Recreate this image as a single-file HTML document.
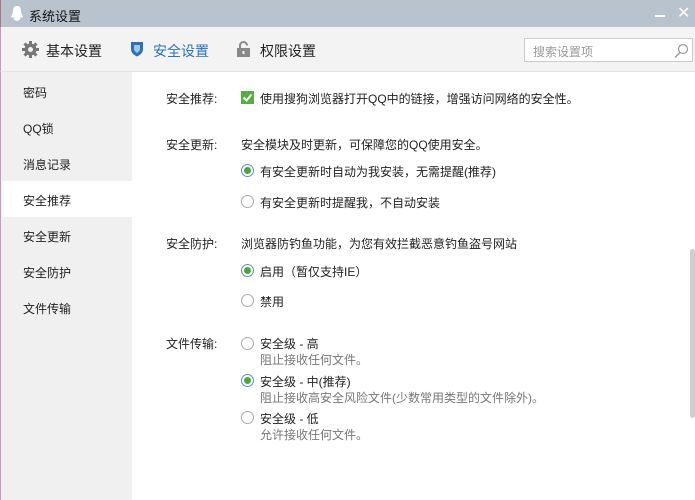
<!DOCTYPE html>
<html><head><meta charset="utf-8"><style>
*{margin:0;padding:0;box-sizing:border-box}
body{width:695px;height:500px;overflow:hidden;background:#fff;font-family:"Liberation Sans","Noto Sans CJK SC","Microsoft YaHei",sans-serif;font-size:12px;color:#222;position:relative}
.title{position:absolute;left:0;top:0;width:695px;height:27px;background:#b9c3cd;border-left:1px solid #a78;}
.title span{position:absolute;left:28px;top:6px;font-size:13px;color:#111}
.tb{position:absolute;left:0;top:27px;width:695px;height:45px;background:#f3f3f3;border-bottom:1px solid #e2e2e2;border-left:1px solid #c9b;}
.tab{position:absolute;top:14px;font-size:14px;color:#222}
.side{position:absolute;left:0;top:72px;width:132px;height:428px;background:#f0f0f0;border-left:1px solid #c9b;}
.si{position:absolute;left:22px;font-size:12px}
.sel{position:absolute;left:1px;top:109px;width:131px;height:36px;background:#fff}
.t{position:absolute;white-space:nowrap}
.g{color:#777}
.rad{position:absolute;width:13px;height:13px;border:1px solid #aaa;border-radius:50%;background:#fff}
.rad.on{border-color:#5b8fc9}
.rad.on::after{content:"";position:absolute;left:2px;top:2px;width:7px;height:7px;border-radius:50%;background:#4aa83a}
</style></head><body>
<div class="title">
<svg style="position:absolute;left:9px;top:5px" width="14" height="17" viewBox="0 0 14 17"><path d="M7 1C3.5 1 3 4 3 7L1 12c1 1 2 0 2.5 0C3 14 5 16 7 16s4-2 3.5-4c.5 0 1.5 1 2.5 0L11 7c0-3-.5-6-4-6z" fill="#fff"/></svg>
<span>系统设置</span>
<div class="t" style="left:654px;top:9px;width:10px;height:2px;background:#fff;top:15px"></div>
<div class="t" style="left:676px;top:3px;color:#fff;font-size:16px">✕</div>
</div>
<div class="tb">
<svg style="position:absolute;left:21px;top:14px" width="17" height="17" viewBox="0 0 17 17"><g fill="#777"><circle cx="8.5" cy="8.5" r="6"/><rect x="7" y="0" width="3" height="17"/><rect x="0" y="7" width="17" height="3"/><rect x="7" y="0" width="3" height="17" transform="rotate(45 8.5 8.5)"/><rect x="7" y="0" width="3" height="17" transform="rotate(-45 8.5 8.5)"/></g><circle cx="8.5" cy="8.5" r="2.5" fill="#f3f3f3"/></svg>
<div class="tab" style="left:45px">基本设置</div>
<svg style="position:absolute;left:129px;top:14px" width="14" height="16" viewBox="0 0 14 16"><path d="M1 1h12v7c0 4-3 6-6 7.5C4 14 1 12 1 8z" fill="#2f6fb5"/><path d="M4 4h6v4c0 2-1.5 3-3 4-1.5-1-3-2-3-4z" fill="#9cc8ee"/></svg>
<div class="tab" style="left:152px;color:#2a73b8">安全设置</div>
<svg style="position:absolute;left:235px;top:14px" width="15" height="16" viewBox="0 0 15 16"><path d="M4 7V4.5a3.5 3.5 0 0 1 7 0" stroke="#888" stroke-width="2" fill="none"/><rect x="1" y="7" width="13" height="9" fill="#888"/><rect x="6.5" y="10" width="2" height="3" fill="#f3f3f3"/></svg>
<div class="tab" style="left:259px">权限设置</div>
<div style="position:absolute;left:523px;top:11px;width:169px;height:24px;border:1px solid #ccc;background:#fff">
<span style="position:absolute;left:8px;top:4px;color:#999;font-size:12px">搜索设置项</span>
<svg style="position:absolute;left:148px;top:4px" width="16" height="16" viewBox="0 0 16 16"><circle cx="10" cy="6" r="4.5" stroke="#999" fill="none" stroke-width="1.2"/><path d="M7 9.5L2 14.5" stroke="#999" stroke-width="1.4"/></svg>
</div>
</div>
<div class="side">
<div class="sel"></div>
<div class="si" style="top:12px">密码</div>
<div class="si" style="top:48px">QQ锁</div>
<div class="si" style="top:84px">消息记录</div>
<div class="si" style="top:120px">安全推荐</div>
<div class="si" style="top:156px">安全更新</div>
<div class="si" style="top:192px">安全防护</div>
<div class="si" style="top:228px">文件传输</div>
</div>
<div class="t" style="left:166px;top:90px">安全推荐:</div>
<div class="t" style="left:241px;top:90px;width:13px;height:13px;background:#52b043;top:91px"><svg width="13" height="13" viewBox="0 0 13 13"><path d="M2.5 6.5l3 3 5-6" stroke="#fff" stroke-width="2" fill="none"/></svg></div>
<div class="t" style="left:260px;top:90px">使用搜狗浏览器打开QQ中的链接，增强访问网络的安全性。</div>
<div class="t" style="left:166px;top:136px">安全更新:</div>
<div class="t" style="left:241px;top:136px">安全模块及时更新，可保障您的QQ使用安全。</div>
<div class="rad on" style="left:241px;top:164px"></div><div class="t" style="left:260px;top:163px">有安全更新时自动为我安装，无需提醒(推荐)</div>
<div class="rad" style="left:241px;top:195px"></div><div class="t" style="left:260px;top:194px">有安全更新时提醒我，不自动安装</div>
<div class="t" style="left:166px;top:235px">安全防护:</div>
<div class="t" style="left:241px;top:235px">浏览器防钓鱼功能，为您有效拦截恶意钓鱼盗号网站</div>
<div class="rad on" style="left:241px;top:264px"></div><div class="t" style="left:260px;top:263px">启用（暂仅支持IE）</div>
<div class="rad" style="left:241px;top:294px"></div><div class="t" style="left:260px;top:293px">禁用</div>
<div class="t" style="left:166px;top:335px">文件传输:</div>
<div class="rad" style="left:241px;top:337px"></div><div class="t" style="left:260px;top:335px">安全级 - 高</div>
<div class="t g" style="left:260px;top:351px">阻止接收任何文件。</div>
<div class="rad on" style="left:241px;top:374px"></div><div class="t" style="left:260px;top:373px">安全级 - 中(推荐)</div>
<div class="t g" style="left:260px;top:389px">阻止接收高安全风险文件(少数常用类型的文件除外)。</div>
<div class="rad" style="left:241px;top:411px"></div><div class="t" style="left:260px;top:410px">安全级 - 低</div>
<div class="t g" style="left:260px;top:426px">允许接收任何文件。</div>
<div style="position:absolute;left:690px;top:249px;width:5px;height:169px;background:#cfcfcf;border-radius:3px"></div>
</body></html>
